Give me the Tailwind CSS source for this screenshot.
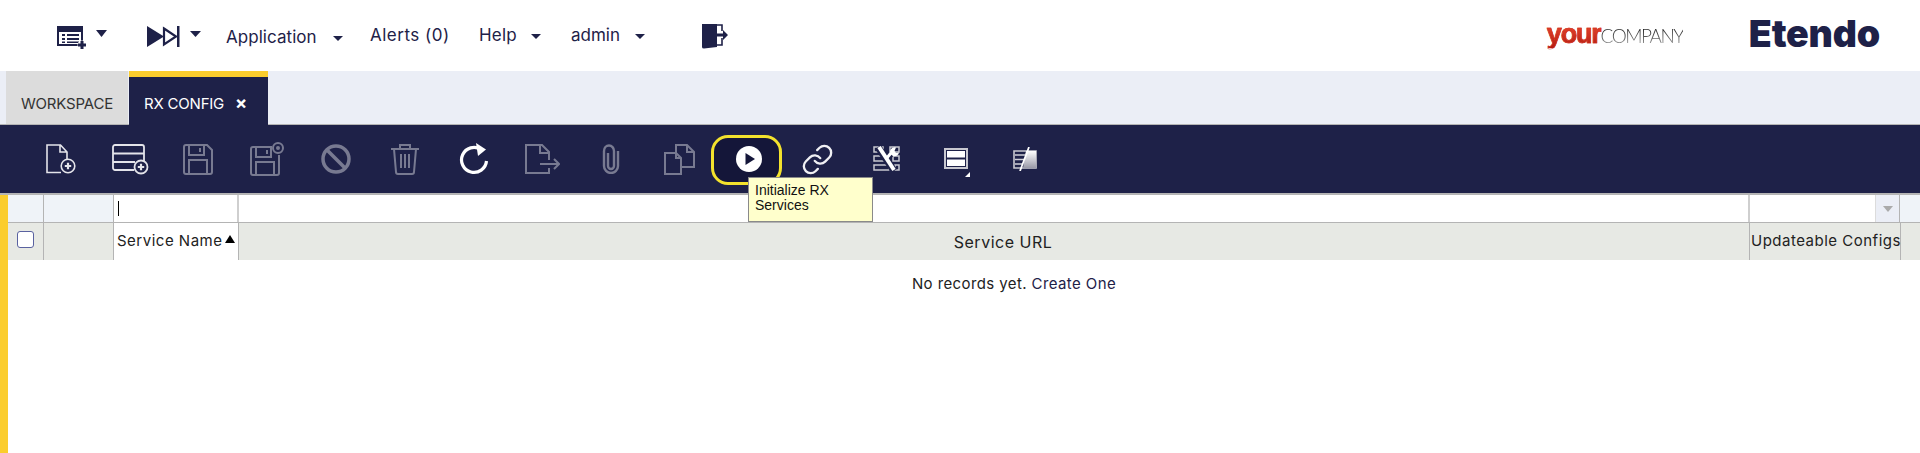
<!DOCTYPE html>
<html>
<head>
<meta charset="utf-8">
<script src="https://cdn.jsdelivr.net/npm/@tailwindcss/browser@4"></script>
</head>
<body class="bg-white font-['Inter','Noto_Sans',sans-serif] text-[#1e2148] overflow-hidden">
<div class="h-[453px] w-[1920px] flex flex-col relative overflow-hidden">
  <!-- top nav -->
  <header class="h-[71px] flex items-center shrink-0 bg-white">
    <div class="w-[226px] flex items-center pl-[57px]">
      <svg width="30" height="23" viewBox="0 0 30 23" class="mt-[3px]"><path d="M0 0h26v20H0z" fill="#1e2148"/><path d="M2 6h22v12H2z" fill="#fff"/><path d="M5 8h3v2H5zM10 8h12v2H10zM5 12h3v2H5zM10 12h12v2H10zM5 15.500h3v1.500H5zM10 15.500h12v1.500H10z" fill="#1e2148"/><circle cx="25" cy="19" r="4.500" fill="#fff"/><path d="M23.500 15h3v2.500H29v3h-2.500V23h-3v-2.500H21v-3h2.500z" fill="#1e2148"/></svg>
      <svg width="11" height="7" viewBox="0 0 11 7" class="ml-[9px] -mt-[5px]"><path d="M0 0h11L5.500 7z" fill="#1e2148"/></svg>
      <svg width="33" height="21" viewBox="0 0 33 21" class="ml-[40px] mt-[2px]"><path d="M0 0l17 10.500L0 21z" fill="#1e2148"/><path d="M17 2.500L29 10.500 17 18.500z" fill="#fff" stroke="#1e2148" stroke-width="2.200"/><path d="M30 0h2.500v21H30z" fill="#1e2148"/></svg>
      <svg width="11" height="6" viewBox="0 0 11 6" class="ml-[10px] -mt-[4px]"><path d="M0 0h11L5.500 6z" fill="#1e2148"/></svg>
    </div>
    <span class="text-[17px] w-[144px] mt-[4px] tracking-[0.05px] whitespace-nowrap">Application<svg width="10" height="5" viewBox="0 0 10 5" class="inline ml-[16px] align-middle"><path d="M0 0h10L5 5z" fill="#1e2148"/></svg></span>
    <span class="text-[17px] w-[109px] mt-[1px] tracking-[0.5px]">Alerts (0)</span>
    <span class="text-[17px] w-[92px] mt-[1px] tracking-[0.2px]">Help<svg width="10" height="5" viewBox="0 0 10 5" class="inline ml-[14px] align-middle"><path d="M0 0h10L5 5z" fill="#1e2148"/></svg></span>
    <span class="text-[17px] w-[130px] mt-[1px]">admin<svg width="10" height="5" viewBox="0 0 10 5" class="inline ml-[15px] align-middle"><path d="M0 0h10L5 5z" fill="#1e2148"/></svg></span>
    <svg width="27" height="26" viewBox="0 0 27 26"><path d="M1 1h15v23l-13 1.500Q1 25.500 1 24z" fill="#1e2148"/><path d="M16 2h5v6M21 15v7h-5" fill="none" stroke="#1e2148" stroke-width="1.600"/><path d="M16 10.500h6V7l5 5-5 5v-3.500h-6z" fill="#1e2148"/></svg>
    <div class="ml-auto flex items-center pr-[40px]">
      <span class="font-['Liberation_Sans',sans-serif] text-[27px] leading-none flex items-baseline mr-[66px] w-[136px] whitespace-nowrap -mt-[3px]"><b class="bg-linear-to-b from-[#ee4a30] to-[#b41a10] bg-clip-text text-transparent font-bold tracking-[-1.200px] [-webkit-text-stroke:0.6px_#d0301e]">your</b><span class="font-['Lato',sans-serif] bg-linear-to-b from-[#111] to-[#999] bg-clip-text text-transparent text-[19px] tracking-[-1.500px] font-light">COMPANY</span></span>
      <span class="font-['Inter',sans-serif] font-black text-[37.500px] leading-none text-[#1e2148] tracking-[-0.200px] -mt-[3px]">Etendo</span>
    </div>
  </header>
  <!-- tabs -->
  <div class="h-[54px] bg-[#ebeef6] border-b border-[#b4b4b4] flex pl-[6px] shrink-0">
    <div class="w-[122px] h-full bg-[#dcdcdc] flex items-center justify-center text-[15px] text-[#333] pt-[14px] tracking-[-0.200px]">WORKSPACE</div>
    <div class="w-[139px] ml-[1px] h-[54px] bg-[#1e2148] border-t-[6px] border-[#fbcd2d] flex items-center text-white text-[15px] pl-[15px] gap-[11px] pt-[6px] tracking-[-0.200px]">RX CONFIG<span class="text-[18px] leading-none font-bold -mt-[2px]">×</span></div>
  </div>
  <!-- toolbar -->
  <div class="h-[70px] bg-[#1e2148] border-b-2 border-[#b4b4b4] flex items-center pl-[25px] shrink-0 relative">
    <div class="w-[69px] flex justify-center pl-[2px]"><svg width="30" height="30" viewBox="0 0 30 30" fill="none" stroke="#e4e4ea" stroke-width="1.600"><path d="M15 28.500H1V1h13.500L21 8v8M14 1v7h7"/><circle cx="22" cy="22" r="6.800"/><path d="M18.800 22h6.400M22 18.800v6.400" stroke-width="2.200"/></svg></div>
    <div class="w-[69px] flex justify-center pl-[3px]"><svg width="37" height="31" viewBox="0 0 37 31" fill="none" stroke="#e4e4ea" stroke-width="1.800"><path d="M22 26H3a2 2 0 0 1-2-2V3a2 2 0 0 1 2-2h27a2 2 0 0 1 2 2v15"/><path d="M1 9.500h31M1 18h22"/><circle cx="29" cy="23" r="6.500"/><path d="M25.800 23h6.400M29 19.800v6.400" stroke-width="2.200"/></svg></div>
    <div class="w-[69px] flex justify-center opacity-40"><svg width="30" height="31" viewBox="0 0 30 31" fill="none" stroke="#fff" stroke-width="2"><path d="M3 1h21l5 5v22a2 2 0 0 1-2 2H3a2 2 0 0 1-2-2V3a2 2 0 0 1 2-2zM6 1v10h15V1M17 4v4M6 30V16h18v14"/></svg></div>
    <div class="w-[69px] flex justify-center opacity-40"><svg width="34" height="34" viewBox="0 0 34 34" fill="none" stroke="#fff" stroke-width="2"><path d="M22 5H3a2 2 0 0 0-2 2v24a2 2 0 0 0 2 2h24a2 2 0 0 0 2-2V13M6 5v10h15V5M17 8v4M6 33V20h18v13"/><circle cx="28" cy="6" r="5"/><circle cx="28" cy="6" r="1" fill="#fff"/></svg></div>
    <div class="w-[69px] flex justify-center opacity-40"><svg width="30" height="30" viewBox="0 0 30 30" fill="none" stroke="#fff" stroke-width="3.500"><circle cx="15" cy="15" r="13"/><path d="M6 6l18 18"/></svg></div>
    <div class="w-[69px] flex justify-center opacity-40"><svg width="30" height="32" viewBox="0 0 30 32" fill="none" stroke="#fff" stroke-width="2"><path d="M1 6h28M10 6V2h10v4M4 6l2 23a2 2 0 0 0 2 2h14a2 2 0 0 0 2-2l2-23M11 11v14M15 11v14M19 11v14"/></svg></div>
    <div class="w-[69px] flex justify-center"><svg width="30" height="32" viewBox="0 0 30 32" fill="none" stroke="#fff" stroke-width="3.200"><path d="M22 6.500A12.500 12.500 0 1 0 27.500 18"/><path d="M17 0l10 6.500-8 6.500z" fill="#fff" stroke="none"/></svg></div>
    <div class="w-[68px] flex justify-center opacity-40"><svg width="35" height="30" viewBox="0 0 35 30" fill="none" stroke="#fff" stroke-width="2"><path d="M24 16V8l-7-7H1v28h23v-5M15 1v8h9M15 20h18M29 15l5 5-5 5"/></svg></div>
    <div class="w-[69px] flex justify-center opacity-40"><svg width="20" height="30" viewBox="0 0 20 30" fill="none" stroke="#fff" stroke-width="2.400"><path d="M7 9v13a3 3 0 0 0 6 0V7a5 5.500 0 0 0-10 0v15a7 7 0 0 0 14 0V7"/></svg></div>
    <div class="w-[69px] flex justify-center opacity-40"><svg width="31" height="31" viewBox="0 0 31 31" fill="none" stroke="#fff" stroke-width="2"><path d="M12 9H1v21h16V14l-5-5v5h5M12 9V1h11l7 7v15H17M23 1v7h7"/></svg></div>
    <div class="w-[69px] h-full relative flex justify-center items-center">
      <div class="absolute left-[-3px] top-[10px] w-[71px] h-[50px] rounded-[17px] border-[3px] border-[#f3e22d] bg-[#141639]"></div>
      <svg width="26" height="26" viewBox="0 0 26 26" class="relative"><circle cx="13" cy="13" r="13" fill="#fff"/><path d="M9.500 7l9.500 6-9.500 6z" fill="#141639"/></svg>
    </div>
    <div class="w-[69px] flex justify-center"><svg width="33" height="33" viewBox="0 0 24 24" fill="none" stroke="#f0f0f4" stroke-width="1.700" stroke-linecap="round"><path d="M10 13a5 5 0 0 0 7.540.54l3-3a5 5 0 0 0-7.070-7.070l-1.720 1.710"/><path d="M14 11a5 5 0 0 0-7.540-.54l-3 3a5 5 0 0 0 7.070 7.070l1.710-1.710"/></svg></div>
    <div class="w-[69px] flex justify-center"><svg width="27" height="26" viewBox="0 0 27 26" fill="none"><path d="M1 1h9v5H1zM1 10h12v5H1zM1 19h15v5H1zM17 1h9v5h-9zM20 10h6v5h-6zM22 19h4v5h-4z" stroke="#c8c8d0" stroke-width="1.500"/><path d="M5 1l16 24" stroke="#1e2148" stroke-width="7"/><path d="M13 14l5-6" stroke="#1e2148" stroke-width="6"/><path d="M6 1l15 23" stroke="#fff" stroke-width="4"/><path d="M13 13l5-6" stroke="#fff" stroke-width="3"/><path d="M23 1.500a4.500 4.500 0 1 0 3 5l-3 .5-1.500-2z" fill="#fff"/></svg></div>
    <div class="w-[69px] flex justify-center relative"><svg width="24" height="21" viewBox="0 0 24 21" class="-mt-[1px]"><rect x="1" y="1" width="22" height="19" fill="none" stroke="#c8c8d0" stroke-width="2"/><path d="M3 3h18v6.500H3zM3 11.500h18V18H3z" fill="#fff"/></svg><span class="absolute left-[44px] top-[23px] w-0 h-0 border-l-[5px] border-l-transparent border-b-[5px] border-b-white"></span></div>
    <div class="w-[69px] flex justify-center"><svg width="24" height="24" viewBox="0 0 24 24"><defs><linearGradient id="g" x1="0" y1="0" x2="0" y2="1"><stop offset="0" stop-color="#fff"/><stop offset="1" stop-color="#9a9aa8"/></linearGradient></defs><path d="M1 4h22v17H1z" fill="#1e2148" stroke="#c8c8d0" stroke-width="1.600"/><path d="M13 4h10v17H10z" fill="url(#g)"/><path d="M2 8h10M2 12.500h9M2 17h8" stroke="#d0d0d8" stroke-width="1.600"/><path d="M16 0L7 24" stroke="#fff" stroke-width="1.800"/></svg></div>
  </div>
  <!-- grid -->
  <div class="flex-1 flex min-h-0">
    <div class="w-[8px] bg-[#fbcd2d] shrink-0"></div>
    <div class="flex-1 flex flex-col min-w-0">
      <div class="h-[28px] flex border-b border-[#b4b4b4] shrink-0">
        <div class="w-[36px] bg-[#eff3f8] border-r border-[#b4b4b4]"></div>
        <div class="w-[70px] bg-[#eff3f8] border-r border-[#b4b4b4]"></div>
        <div class="w-[125px] bg-white border-r-2 border-[#cfcfcf] flex items-center pl-[4px]"><span class="w-px h-[15px] bg-black"></span></div>
        <div class="w-[1511px] bg-white border-r-2 border-[#cfcfcf]"></div>
        <div class="w-[150px] bg-white border-r border-[#b4b4b4] flex justify-end"><div class="w-[24px] bg-[#ebeef6] border-l border-[#dcdcdc] flex items-center justify-center"><svg width="10" height="6" viewBox="0 0 10 6"><path d="M0 0h10L5 6z" fill="#aaa"/></svg></div></div>
        <div class="flex-1 bg-[#eff3f8]"></div>
      </div>
      <div class="h-[37px] flex bg-[#e7e9e4] text-[15px] text-[#222] shrink-0 tracking-[0.5px]">
        <div class="w-[36px] border-r border-[#b4b4b4] flex items-center justify-center"><span class="w-[17px] h-[17px] bg-white rounded-[3px] border border-[#5a62a0] -mt-[5px]"></span></div>
        <div class="w-[70px] border-r border-[#b4b4b4]"></div>
        <div class="w-[125px] bg-white border-r border-[#b4b4b4] flex items-center pl-[3px] whitespace-nowrap">Service Name<svg width="10" height="8" viewBox="0 0 10 8" class="ml-[3px] -mt-[6px]"><path d="M0 8h10L5 0z" fill="#000"/></svg></div>
        <div class="w-[1511px] border-r border-[#b4b4b4] flex items-center justify-center pl-[18px] text-[16px]">Service URL</div>
        <div class="w-[151px] border-r border-[#b4b4b4] flex items-center pl-[1px] whitespace-nowrap">Updateable Configs</div>
        <div class="flex-1"></div>
      </div>
      <div class="text-center text-[15px] text-[#222] mt-[13px] pl-[100px] tracking-[0.4px]">No records yet. <span class="text-[#1e2148]">Create One</span></div>
    </div>
  </div>
  <!-- tooltip -->
  <div class="absolute left-[748px] top-[177px] w-[125px] h-[45px] bg-[#ffffcc] border border-[#8a8a8a] font-['Liberation_Sans',sans-serif] text-[14px] leading-[15px] text-[#111] pl-[6px] pt-[5px]">Initialize RX<br>Services</div>
</div>
</body>
</html>
